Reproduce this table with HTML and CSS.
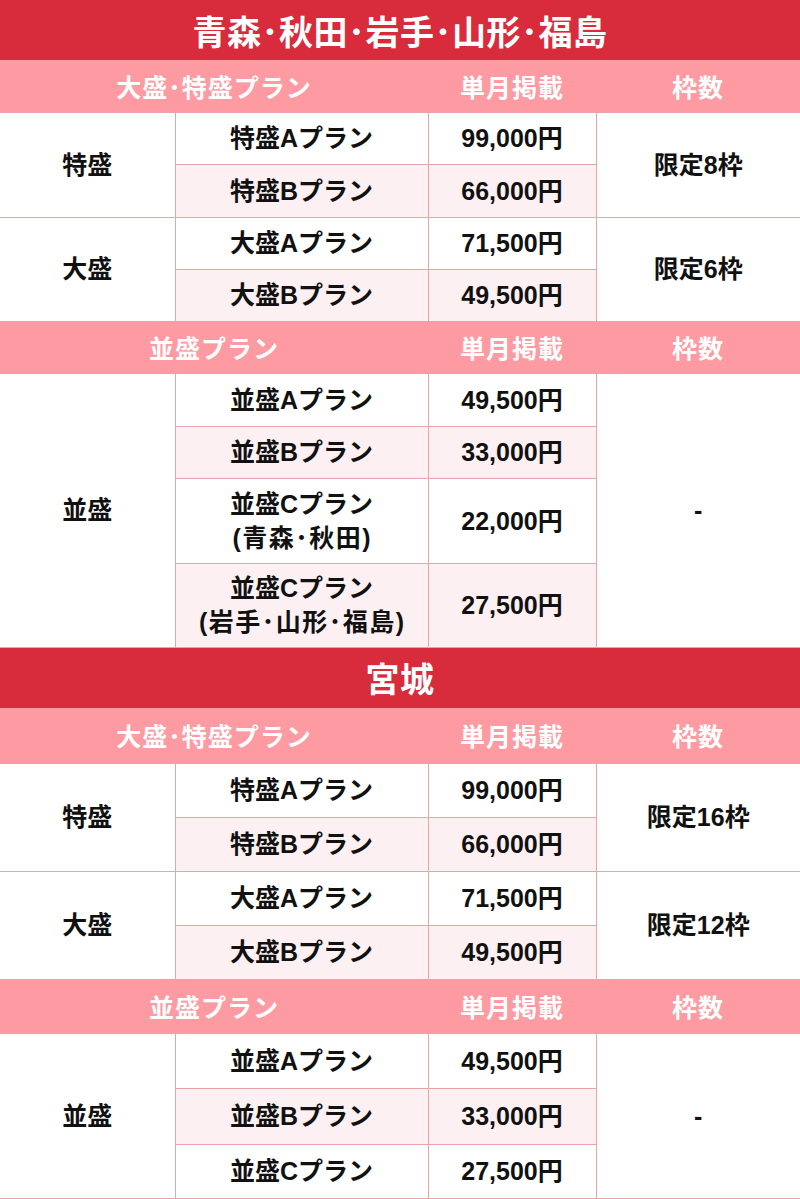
FILE: index.html
```html
<!DOCTYPE html>
<html lang="ja">
<head>
<meta charset="utf-8">
<title>料金表</title>
<link rel="stylesheet" href="styles.css">
</head>
<body>
<table class="price">
  <colgroup>
    <col class="c1"><col class="c2"><col class="c3"><col class="c4">
  </colgroup>
  <tbody>
    <tr class="area h60"><th colspan="4">青森･秋田･岩手･山形･福島</th></tr>
    <tr class="head h52"><th colspan="2">大盛･特盛プラン</th><th>単月掲載</th><th>枠数</th></tr>
    <tr class="h52"><td rowspan="2">特盛</td><td>特盛Aプラン</td><td>99,000円</td><td rowspan="2">限定8枠</td></tr>
    <tr class="alt h53"><td>特盛Bプラン</td><td>66,000円</td></tr>
    <tr class="h52"><td rowspan="2">大盛</td><td>大盛Aプラン</td><td>71,500円</td><td rowspan="2">限定6枠</td></tr>
    <tr class="alt h52"><td>大盛Bプラン</td><td>49,500円</td></tr>
    <tr class="head h52"><th colspan="2">並盛プラン</th><th>単月掲載</th><th>枠数</th></tr>
    <tr class="h53"><td rowspan="4">並盛</td><td>並盛Aプラン</td><td>49,500円</td><td rowspan="4">-</td></tr>
    <tr class="alt h52"><td>並盛Bプラン</td><td>33,000円</td></tr>
    <tr class="h85"><td>並盛Cプラン<br><span class="sub">(青森･秋田)</span></td><td>22,000円</td></tr>
    <tr class="alt h84"><td>並盛Cプラン<br><span class="sub">(岩手･山形･福島)</span></td><td>27,500円</td></tr>
    <tr class="area h61"><th colspan="4">宮城</th></tr>
    <tr class="head h55"><th colspan="2">大盛･特盛プラン</th><th>単月掲載</th><th>枠数</th></tr>
    <tr class="h54"><td rowspan="2">特盛</td><td>特盛Aプラン</td><td>99,000円</td><td rowspan="2">限定16枠</td></tr>
    <tr class="alt h54"><td>特盛Bプラン</td><td>66,000円</td></tr>
    <tr class="h54"><td rowspan="2">大盛</td><td>大盛Aプラン</td><td>71,500円</td><td rowspan="2">限定12枠</td></tr>
    <tr class="alt h54"><td>大盛Bプラン</td><td>49,500円</td></tr>
    <tr class="head h54"><th colspan="2">並盛プラン</th><th>単月掲載</th><th>枠数</th></tr>
    <tr class="h55"><td rowspan="3">並盛</td><td>並盛Aプラン</td><td>49,500円</td><td rowspan="3">-</td></tr>
    <tr class="alt h56"><td>並盛Bプラン</td><td>33,000円</td></tr>
    <tr class="h54"><td>並盛Cプラン</td><td>27,500円</td></tr>
  </tbody>
</table>
</body>
</html>
```
FILE: styles.css
```css
html, body {
  margin: 0;
  padding: 0;
  background: #ffffff;
}

.price {
  width: 800px;
  border-collapse: collapse;
  table-layout: fixed;
  font-family: "Liberation Sans", "Noto Sans CJK JP", sans-serif;
  font-weight: bold;
  color: #111111;
}

.c1 { width: 175px; }
.c2 { width: 253px; }
.c3 { width: 168px; }
.c4 { width: 204px; }

.price th,
.price td {
  padding: 0;
  text-align: center;
  vertical-align: middle;
}

.price td {
  font-size: 25px;
  line-height: 34px;
  border: 1px solid #e9a3ab;
  background: #ffffff;
}

.price tr:first-child th { border-top: 0; }
.price td:first-child { border-left: 0; }
.price td:last-child { border-right: 0; }

.price .alt td { background: #fdf0f2; }
.price .alt td[rowspan] { background: #ffffff; }

.sub {
  letter-spacing: 1.5px;
  margin-left: 1.5px;
}

.area th {
  background: #d82b3b;
  color: #ffffff;
  font-size: 34px;
  letter-spacing: 0.5px;
}

.head th {
  background: #fe9ba2;
  color: #ffffff;
  font-size: 25px;
  letter-spacing: 1px;
}

.h52 { height: 52px; }
.h53 { height: 53px; }
.h54 { height: 54px; }
.h55 { height: 55px; }
.h56 { height: 56px; }
.h60 { height: 60px; }
.h61 { height: 61px; }
.h84 { height: 84px; }
.h85 { height: 85px; }
```
